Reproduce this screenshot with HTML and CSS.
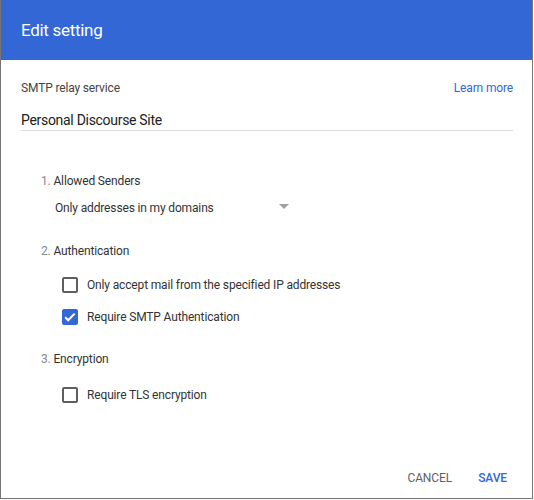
FILE: index.html
```html
<!DOCTYPE html>
<html lang="en">
<head>
  <meta charset="UTF-8">
  <meta name="viewport" content="width=device-width, initial-scale=1.0">
  <title>Edit setting</title>
  <link rel="stylesheet" href="styles.css">
</head>
<body>
  <div class="dialog">
    <div class="header">
      <h1>Edit setting</h1>
    </div>

    <div class="content">
      <div class="service-row">
        <span class="service-label">SMTP relay service</span>
        <a class="learn-more" href="#">Learn more</a>
      </div>
      <div class="name-field">Personal Discourse Site</div>

      <div class="section section-senders">
        <div class="section-title"><span class="num">1.</span> Allowed Senders</div>
        <div class="select">
          <span>Only addresses in my domains</span>
          <span class="arrow"></span>
        </div>
      </div>

      <div class="section section-auth">
        <div class="section-title"><span class="num">2.</span> Authentication</div>
        <div class="options">
          <label class="option">
            <span class="box"></span>
            <span>Only accept mail from the specified IP addresses</span>
          </label>
          <label class="option">
            <span class="box checked">
              <svg viewBox="0 0 16 16" width="16" height="16">
                <path d="M3.2 8.2l3 3 6.4-6.6" fill="none" stroke="#fff" stroke-width="2"/>
              </svg>
            </span>
            <span>Require SMTP Authentication</span>
          </label>
        </div>
      </div>

      <div class="section section-enc">
        <div class="section-title"><span class="num">3.</span> Encryption</div>
        <div class="options">
          <label class="option">
            <span class="box"></span>
            <span>Require TLS encryption</span>
          </label>
        </div>
      </div>
    </div>

    <div class="footer">
      <button class="btn btn-cancel">Cancel</button>
      <button class="btn btn-save">Save</button>
    </div>
  </div>
</body>
</html>
```

FILE: styles.css
```css
body {
  margin: 0;
  padding: 0;
  background-color: #fff;
  font-family: Roboto, "Liberation Sans", Arial, sans-serif;
  color: #212121;
}

.dialog {
  width: 533px;
  height: 499px;
  box-sizing: border-box;
  border: 1px solid #757575;
  border-top: none;
  display: flex;
  flex-direction: column;
  background-color: #fff;
}

.header {
  height: 60px;
  background-color: #3367d6;
  padding: 0 20px;
}

.header h1 {
  margin: 0;
  font-size: 17px;
  font-weight: 400;
  letter-spacing: -0.3px;
  line-height: 60px;
  color: #fff;
}

.content {
  padding: 0 19px 0 20px;
}

.service-row {
  display: flex;
  justify-content: space-between;
  margin-top: 20px;
  font-size: 12px;
  letter-spacing: -0.15px;
  line-height: 16px;
}

.service-label {
  color: #444;
}

.learn-more {
  color: #3367d6;
  text-decoration: none;
}

.name-field {
  margin-top: 15px;
  font-size: 14px;
  letter-spacing: -0.3px;
  line-height: 19px;
  color: #212121;
  border-bottom: 1px solid #dcdcdc;
}

.section {
  padding-left: 20px;
  font-size: 12px;
  letter-spacing: -0.15px;
  line-height: 16px;
}

.section-senders {
  margin-top: 42px;
}

.section-auth {
  margin-top: 27px;
}

.section-enc {
  margin-top: 18px;
}

.section-title {
  color: #333;
}

.num {
  color: #888;
}

.select {
  display: flex;
  justify-content: space-between;
  align-items: center;
  width: 234px;
  margin-top: 11px;
  padding-left: 14px;
  color: #333;
}

.arrow {
  width: 0;
  height: 0;
  border-left: 5.5px solid transparent;
  border-right: 5.5px solid transparent;
  border-top: 5px solid #a0a0a0;
  margin-top: -4px;
}

.options {
  margin-top: 10px;
  padding-left: 21px;
}

.section-enc .options {
  margin-top: 12px;
}

.option {
  display: flex;
  align-items: center;
  gap: 9px;
  height: 32px;
  color: #333;
}

.box {
  width: 16px;
  height: 16px;
  box-sizing: border-box;
  border: 2px solid #5f5f5f;
  border-radius: 2px;
  position: relative;
}

.box.checked {
  background-color: #3367d6;
  border-color: #3367d6;
}

.box svg {
  position: absolute;
  left: -2px;
  top: -2px;
}

.footer {
  margin-top: auto;
  display: flex;
  justify-content: flex-end;
  gap: 26px;
  padding: 0 25px 12px 0;
}

.btn {
  border: none;
  background: none;
  padding: 0;
  font-family: inherit;
  font-size: 12px;
  letter-spacing: -0.1px;
  line-height: 16px;
  text-transform: uppercase;
  cursor: pointer;
}

.btn-cancel {
  color: #616161;
}

.btn-save {
  color: #3367d6;
  font-weight: 500;
}
```
